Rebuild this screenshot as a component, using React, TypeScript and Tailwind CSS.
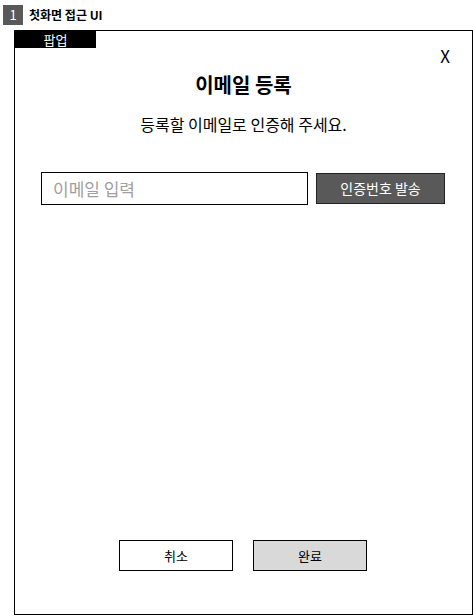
import React from "react";

export default function App() {
  const font = { fontFamily: '"Malgun Gothic", "Noto Sans CJK KR", "Liberation Sans", sans-serif' };
  return (
    <div className="w-[473px] h-[616px] bg-white text-black" style={font}>
      <div className="flex items-center h-[28px] pl-[3px] pt-[1px]">
        <div className="w-[20px] h-[20px] bg-[#595959] text-white text-[13px] flex items-center justify-center leading-none">1</div>
        <div className="ml-[6px] text-[12px] font-bold leading-none">첫화면 접근 UI</div>
      </div>
      <div className="ml-[14px] mt-[2px] w-[459px] h-[585px] border border-black flex flex-col">
        <div className="flex justify-between">
          <div className="w-[81px] h-[17px] bg-black text-white text-[13px] leading-[17px] text-center">팝업</div>
        </div>
        <div className="flex justify-end pr-[22px] -mt-[2px]">
          <span className="text-[17px] leading-[20px]">X</span>
        </div>
        <div className="text-center text-[20px] font-bold leading-[26px] mt-[6px]">이메일 등록</div>
        <div className="text-center text-[16px] leading-[20px] mt-[16px]">등록할 이메일로 인증해 주세요.</div>
        <div className="flex items-center mt-[38px] pl-[26px]">
          <div className="w-[267px] h-[33px] border border-black flex items-center pl-[11px] text-[17px] text-[#a0a0a0]">이메일 입력</div>
          <div className="ml-[8px] w-[129px] h-[31px] bg-[#595959] border border-[#222] text-white text-[14px] flex items-center justify-center">인증번호 발송</div>
        </div>
        <div className="flex-1" />
        <div className="flex gap-[20px] mb-[43px] pl-[104px]">
          <div className="w-[114px] h-[31px] border border-black bg-white text-[13px] flex items-center justify-center">취소</div>
          <div className="w-[114px] h-[31px] border border-black bg-[#d9d9d9] text-[13px] flex items-center justify-center">완료</div>
        </div>
      </div>
    </div>
  );
}
